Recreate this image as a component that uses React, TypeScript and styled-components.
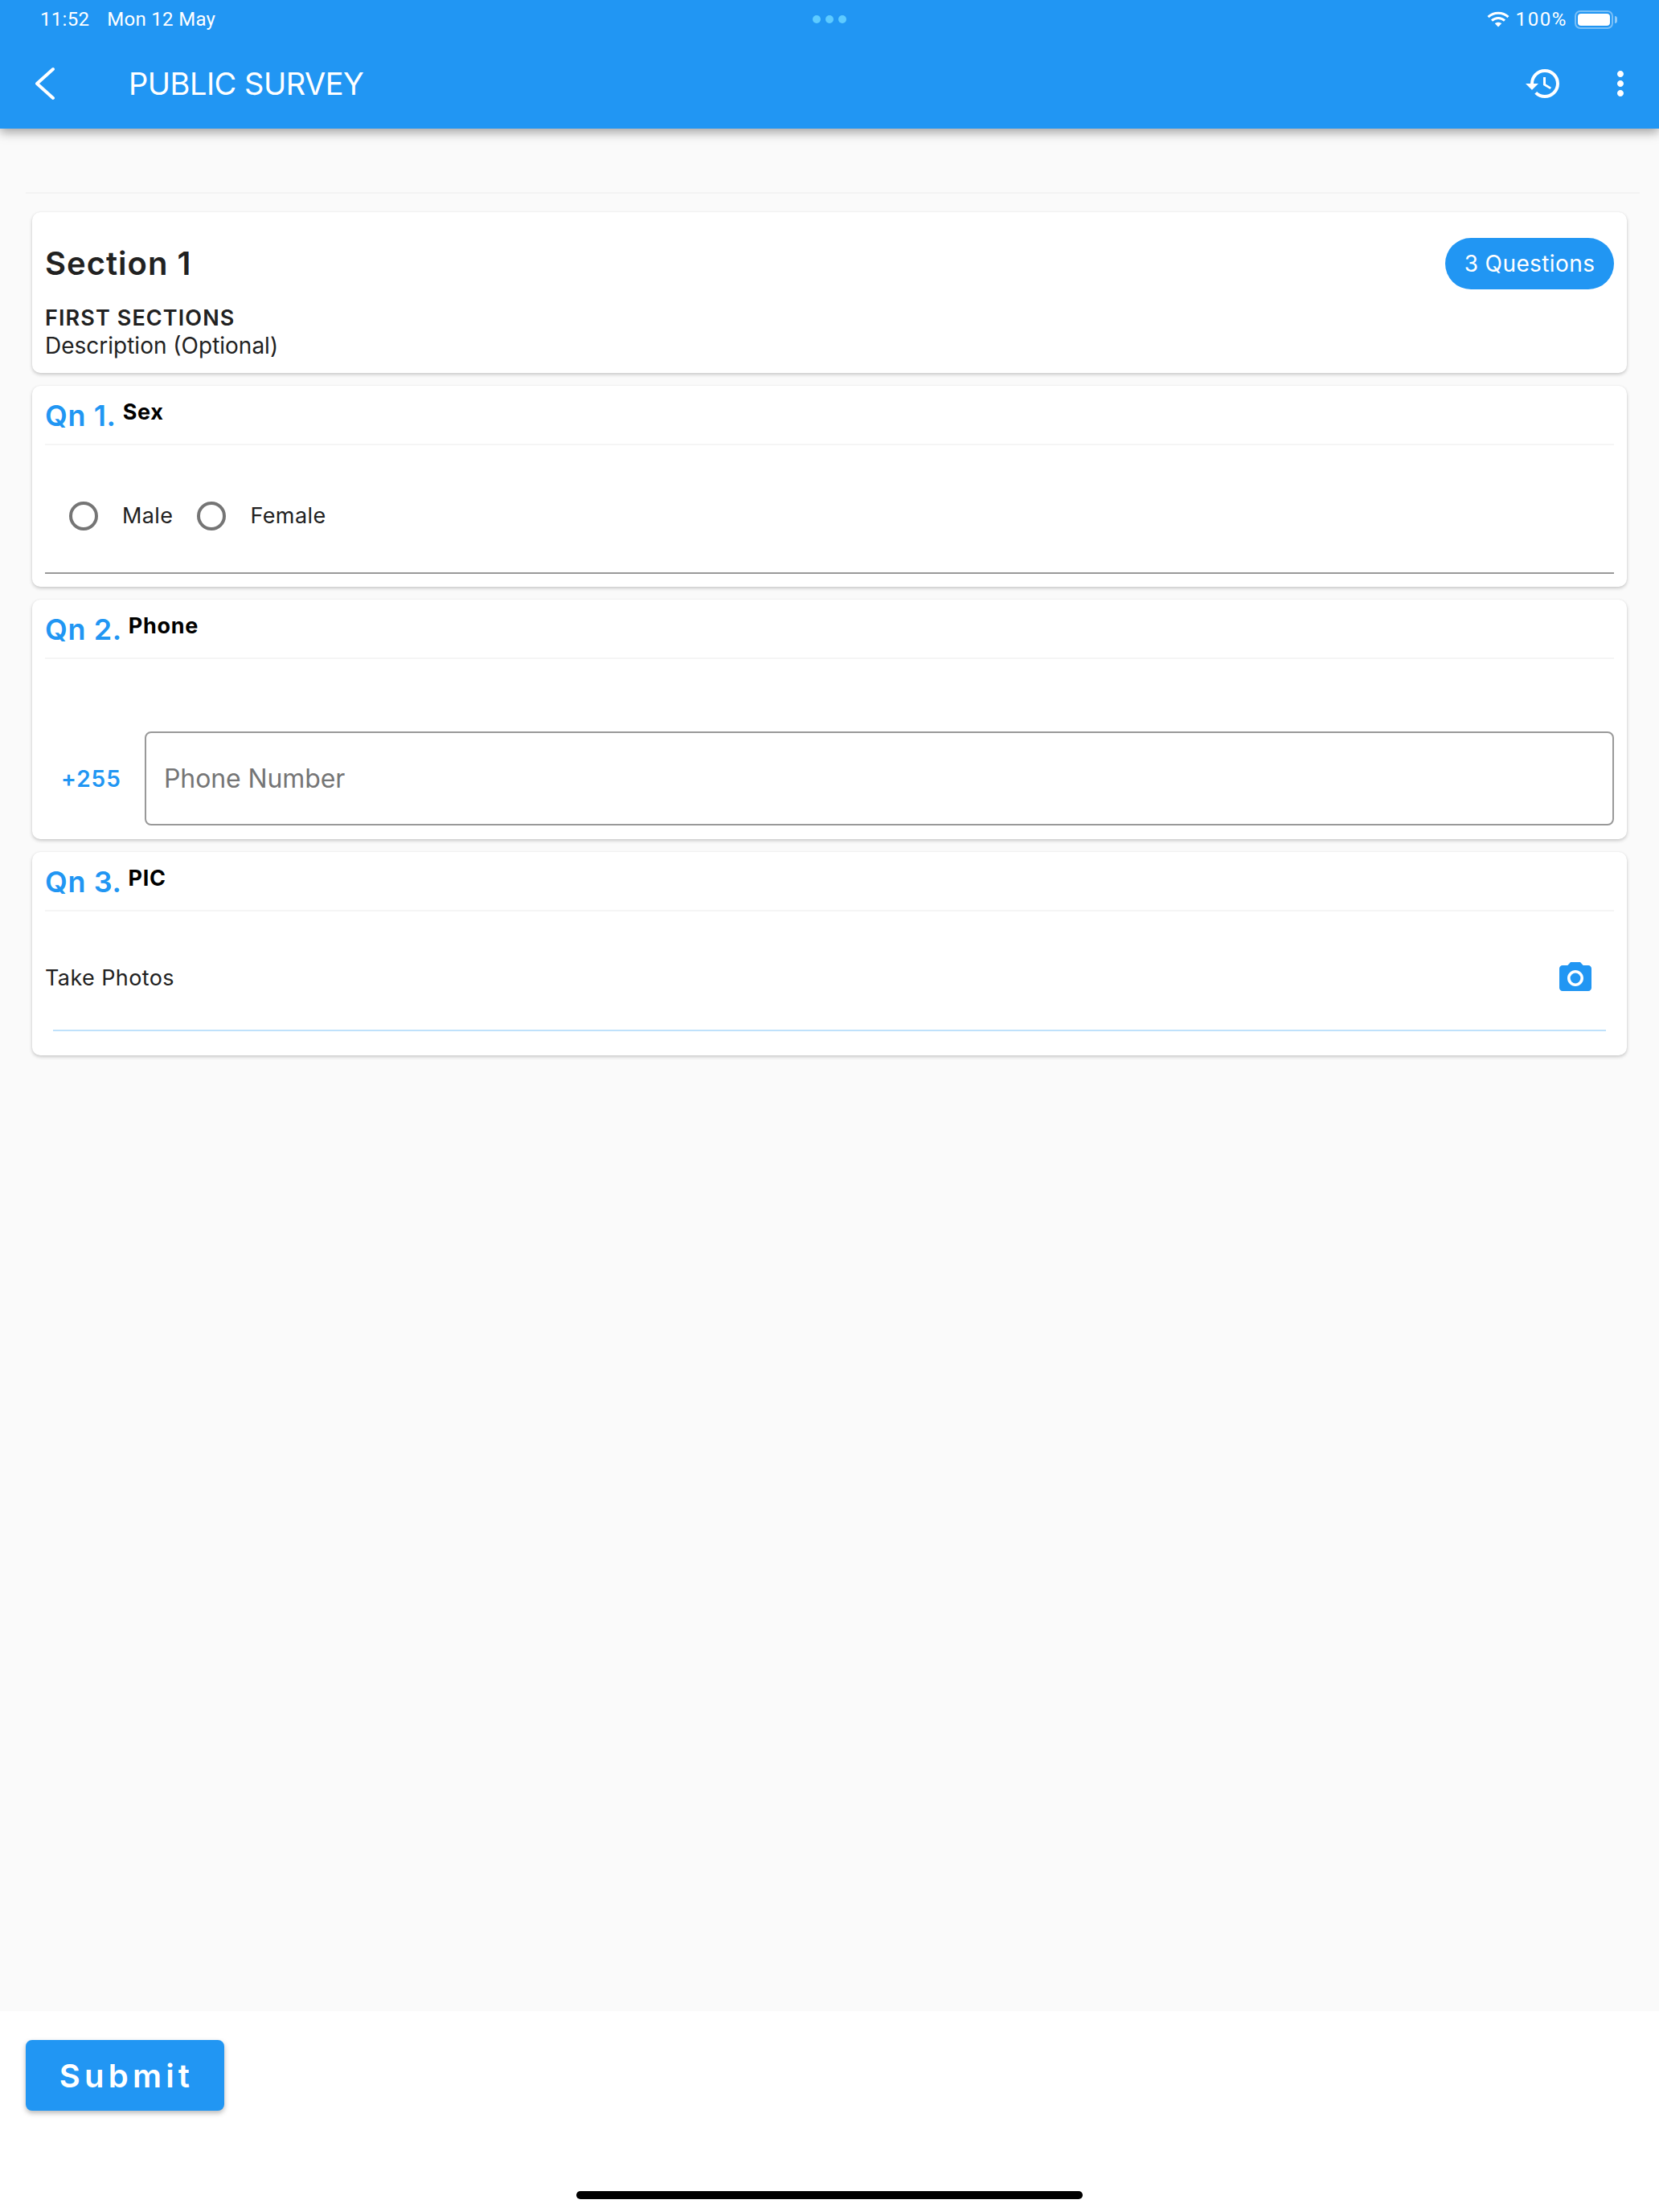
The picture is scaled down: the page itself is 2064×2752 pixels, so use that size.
import React from "react";
import styled, { createGlobalStyle } from "styled-components";
import { MdHistory, MdMoreVert, MdCameraAlt } from "react-icons/md";

const BLUE = "#2196f3";

const GlobalStyle = createGlobalStyle`
  html, body {
    margin: 0;
    padding: 0;
    background: #fafafa;
  }
  * {
    box-sizing: border-box;
  }
  body {
    font-family: "Inter", "Liberation Sans", sans-serif;
  }
`;

const Page = styled.div`
  width: 2064px;
  height: 2752px;
  display: flex;
  flex-direction: column;
  background: #fafafa;
  overflow: hidden;
`;

const Header = styled.header`
  height: 160px;
  flex: none;
  background: ${BLUE};
  color: #fff;
  box-shadow: 0 5px 12px rgba(0, 0, 0, 0.34);
  position: relative;
  z-index: 1;
`;

const StatusBar = styled.div`
  height: 48px;
  display: grid;
  grid-template-columns: 961px 42px 1fr;
  align-items: center;
  padding: 0 57px 0 50px;
  font-family: "Roboto", "Liberation Sans", sans-serif;
  font-size: 24px;
  letter-spacing: 0.3px;
`;

const StatusLeft = styled.div`
  display: flex;
  gap: 22px;
`;

const Dots = styled.div`
  display: flex;
  gap: 6px;
`;

const Dot = styled.span`
  width: 10px;
  height: 10px;
  border-radius: 50%;
  background: #5ecbff;
`;

const StatusRight = styled.div`
  display: flex;
  align-items: center;
  justify-content: flex-end;
  gap: 8px;
`;

const BatteryLevel = styled.span`
  letter-spacing: 1.6px;
`;

const Battery = styled.span`
  display: block;
  width: 48px;
  height: 23px;
  border: 2px solid rgba(255, 255, 255, 0.4);
  border-radius: 7px;
  padding: 2px;
  margin-left: 1px;
  position: relative;

  &::before {
    content: "";
    display: block;
    height: 100%;
    background: #fff;
    border-radius: 4px;
  }

  &::after {
    content: "";
    position: absolute;
    right: -7px;
    top: 5px;
    width: 3px;
    height: 9px;
    background: rgba(255, 255, 255, 0.5);
    border-radius: 0 3px 3px 0;
  }
`;

const AppBar = styled.div`
  height: 112px;
  display: flex;
  align-items: center;
  padding: 0 24px 0 44px;
`;

const BackButton = styled.button`
  width: 116px;
  padding: 0;
  border: 0;
  background: none;
  display: flex;
  color: inherit;
`;

const Title = styled.h1`
  flex: 1;
  margin: 0;
  font-size: 38px;
  font-weight: 400;
  letter-spacing: -0.5px;
`;

const AppBarIcons = styled.div`
  display: flex;
  align-items: center;
  gap: 48px;
  font-size: 48px;
  line-height: 0;
`;

const Content = styled.main`
  flex: 1;
  padding-top: 79px;
`;

const TopRule = styled.div`
  height: 2px;
  margin: 0 24px 0 32px;
  background: #f3f3f3;
`;

const Cards = styled.div`
  display: flex;
  flex-direction: column;
  gap: 16px;
  margin: 23px 40px 0;
`;

const Card = styled.section`
  background: #fff;
  border-radius: 10px;
  padding: 0 16px;
  box-shadow: 0 2px 4px rgba(0, 0, 0, 0.2), 0 0 2px rgba(0, 0, 0, 0.06);
`;

const SectionCard = styled(Card)`
  height: 200px;
  padding-top: 32px;
`;

const SectionHead = styled.div`
  display: flex;
  align-items: center;
  justify-content: space-between;
`;

const SectionTitle = styled.h2`
  margin: 0;
  font-size: 40px;
  line-height: 62px;
  font-weight: 600;
  letter-spacing: 1px;
  color: #212121;
`;

const Pill = styled.span`
  height: 64px;
  width: 210px;
  display: flex;
  align-items: center;
  justify-content: center;
  border-radius: 32px;
  background: ${BLUE};
  color: #fff;
  font-size: 28px;
  letter-spacing: 0.4px;
`;

const SectionName = styled.div`
  margin-top: 19px;
  font-size: 27px;
  line-height: 34px;
  font-weight: 600;
  letter-spacing: 1.1px;
  color: #212121;
`;

const SectionNote = styled.div`
  font-size: 28px;
  line-height: 34px;
  color: #212121;
`;

const QuestionHead = styled.div`
  height: 74px;
  padding-top: 15px;
  display: flex;
  align-items: flex-start;
  gap: 8px;
  border-bottom: 2px solid #f5f5f5;
`;

const QuestionNo = styled.span`
  font-size: 36px;
  line-height: 44px;
  font-weight: 600;
  letter-spacing: 0.6px;
  color: ${BLUE};
`;

const QuestionName = styled.span`
  font-size: 27px;
  line-height: 36px;
  font-weight: 700;
  letter-spacing: 0.7px;
  color: #000;
`;

const OptionRow = styled.div`
  box-sizing: content-box;
  height: 139px;
  padding: 18px 0 1px 30px;
  margin-bottom: 16px;
  display: flex;
  align-items: center;
  gap: 30px;
  border-bottom: 2px solid #999;
`;

const Radio = styled.span`
  width: 36px;
  height: 36px;
  flex: none;
  border: 4px solid #757575;
  border-radius: 50%;
`;

const RadioLabel = styled.span`
  font-size: 27px;
  letter-spacing: 0.4px;
  color: #212121;
`;

const PhoneRow = styled.div`
  display: flex;
  align-items: center;
  padding: 90px 0 17px 20px;
`;

const DialCode = styled.span`
  width: 104px;
  flex: none;
  font-size: 28px;
  font-weight: 600;
  letter-spacing: 1px;
  color: ${BLUE};
`;

const PhoneInput = styled.input`
  flex: 1;
  height: 117px;
  padding: 0 22px;
  border: 2px solid #999;
  border-radius: 8px;
  background: #fff;
  outline: none;
  font-family: inherit;
  font-size: 32px;
  letter-spacing: -0.1px;

  &::placeholder {
    color: #757575;
    opacity: 1;
  }
`;

const PhotoRow = styled.div`
  height: 128px;
  margin-top: 19px;
  display: flex;
  align-items: center;
  justify-content: space-between;
  padding-right: 24px;
  color: ${BLUE};
  font-size: 48px;
  line-height: 0;
`;

const PhotoLabel = styled.span`
  font-size: 27px;
  line-height: 34px;
  letter-spacing: 0.4px;
  color: #212121;
`;

const PhotoRule = styled.div`
  height: 2px;
  margin: 0 10px 30px;
  background: #bfe1fb;
`;

const Footer = styled.footer`
  height: 250px;
  flex: none;
  background: #fff;
  padding: 36px 32px 0;
  display: flex;
  flex-direction: column;
  align-items: flex-start;
`;

const SubmitButton = styled.button`
  width: 247px;
  height: 88px;
  padding: 0 0 0 4px;
  border: 0;
  border-radius: 8px;
  background: ${BLUE};
  color: #fff;
  font-family: inherit;
  font-size: 40px;
  font-weight: 600;
  letter-spacing: 5.2px;
  box-shadow: 0 3px 6px rgba(0, 0, 0, 0.28);
`;

const HomeBar = styled.div`
  width: 630px;
  height: 10px;
  margin: 100px auto 0;
  border-radius: 5px;
  background: #000;
`;

const WifiIcon = () => (
  <svg width="28" height="20" viewBox="0 0 28 20" fill="none" stroke="#fff" strokeWidth="3">
    <path d="M1.5 7.2C8.5 .6 19.5 .6 26.5 7.2" />
    <path d="M6 11.6c4.6-4.2 11.400-4.200 16 0" />
    <path d="M14 19.500l-4.200-4.300c2.400-2 6-2 8.400 0z" fill="#fff" stroke="none" />
  </svg>
);

const BackIcon = () => (
  <svg width="24" height="42" viewBox="0 0 24 42" fill="none" stroke="#fff" strokeWidth="4" strokeLinecap="round" strokeLinejoin="round">
    <path d="M22 3 2 21l20 18" />
  </svg>
);

const App: React.FC = () => {
  return (
    <Page>
      <GlobalStyle />
      <Header>
        <StatusBar>
          <StatusLeft>
            <span>11:52</span>
            <span>Mon 12 May</span>
          </StatusLeft>
          <Dots>
            <Dot />
            <Dot />
            <Dot />
          </Dots>
          <StatusRight>
            <WifiIcon />
            <BatteryLevel>100%</BatteryLevel>
            <Battery />
          </StatusRight>
        </StatusBar>
        <AppBar>
          <BackButton>
            <BackIcon />
          </BackButton>
          <Title>PUBLIC SURVEY</Title>
          <AppBarIcons>
            <MdHistory />
            <MdMoreVert />
          </AppBarIcons>
        </AppBar>
      </Header>

      <Content>
        <TopRule />
        <Cards>
          <SectionCard>
            <SectionHead>
              <SectionTitle>Section 1</SectionTitle>
              <Pill>3 Questions</Pill>
            </SectionHead>
            <SectionName>FIRST SECTIONS</SectionName>
            <SectionNote>Description (Optional)</SectionNote>
          </SectionCard>

          <Card>
            <QuestionHead>
              <QuestionNo>Qn 1.</QuestionNo>
              <QuestionName>Sex</QuestionName>
            </QuestionHead>
            <OptionRow>
              <Radio />
              <RadioLabel>Male</RadioLabel>
              <Radio />
              <RadioLabel>Female</RadioLabel>
            </OptionRow>
          </Card>

          <Card>
            <QuestionHead>
              <QuestionNo>Qn 2.</QuestionNo>
              <QuestionName>Phone</QuestionName>
            </QuestionHead>
            <PhoneRow>
              <DialCode>+255</DialCode>
              <PhoneInput placeholder="Phone Number" readOnly />
            </PhoneRow>
          </Card>

          <Card>
            <QuestionHead>
              <QuestionNo>Qn 3.</QuestionNo>
              <QuestionName>PIC</QuestionName>
            </QuestionHead>
            <PhotoRow>
              <PhotoLabel>Take Photos</PhotoLabel>
              <MdCameraAlt />
            </PhotoRow>
            <PhotoRule />
          </Card>
        </Cards>
      </Content>

      <Footer>
        <SubmitButton>Submit</SubmitButton>
        <HomeBar />
      </Footer>
    </Page>
  );
};

export default App;
